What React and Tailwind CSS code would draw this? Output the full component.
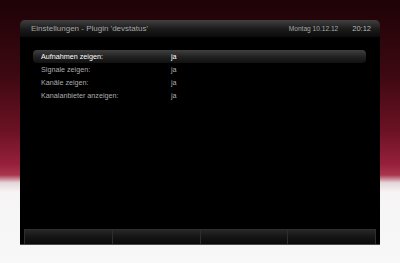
import React from 'react';

const rows = [
  { label: 'Aufnahmen zeigen:', value: 'ja', active: true },
  { label: 'Signale zeigen:', value: 'ja' },
  { label: 'Kanäle zeigen:', value: 'ja' },
  { label: 'Kanalanbieter anzeigen:', value: 'ja' },
];

const App = () => {
  return (
    <div
      className="w-[400px] h-[263px] overflow-hidden pt-[20px] pl-[20px] bg-[linear-gradient(to_bottom,#1e0307_0%,#3c0811_28%,#6c1224_50%,#951f3a_62%,#a8344d_66.5%,#e6d6da_69.5%,#f6f4f4_73%,#f8f8f8_100%)]"
      style={{ fontFamily: '"Liberation Sans", Arial, sans-serif' }}
    >
      <div className="w-[360px] h-[225px] flex flex-col">
        {/* Header */}
        <div className="h-[17px] rounded-t-[5px] bg-[linear-gradient(to_bottom,#404040,#1a1a1a_55%,#0b0b0b)] flex items-center pl-[11px] pr-[9px] pt-px text-[8px] text-[#a8a8a8]">
          <span className="flex-1">Einstellungen - Plugin 'devstatus'</span>
          <span className="text-[6.6px]">Montag 10.12.12</span>
          <span className="ml-[14px] text-[7.5px] text-[#b8b8b8]">20:12</span>
        </div>

        {/* Body */}
        <div className="flex-1 bg-black pt-[13px] pl-[13px] pr-[14px]">
          {rows.map((row, i) => (
            <div
              key={i}
              className={`h-[13px] flex items-center pl-[8px] pt-[2px] text-[7.2px] ${
                row.active
                  ? 'rounded-[4px] bg-[linear-gradient(to_bottom,#404040,#202020_55%,#111111)] text-white'
                  : 'text-[#adadad]'
              }`}
            >
              <span className="w-[130px]">{row.label}</span>
              <span>{row.value}</span>
            </div>
          ))}
        </div>

        {/* Button bar */}
        <div className="h-[16px] bg-black flex pl-[4px] pr-[4px] border-b border-[#4a4a4a]">
          {[0, 1, 2, 3].map((i) => (
            <div
              key={i}
              className="flex-1 border-t border-l border-[#2e2e2e] bg-[linear-gradient(to_bottom,#262626,#151515_50%,#0a0a0a)]"
            />
          ))}
          <div className="w-px bg-[#2e2e2e]" />
        </div>
      </div>
    </div>
  );
};

export default App;
